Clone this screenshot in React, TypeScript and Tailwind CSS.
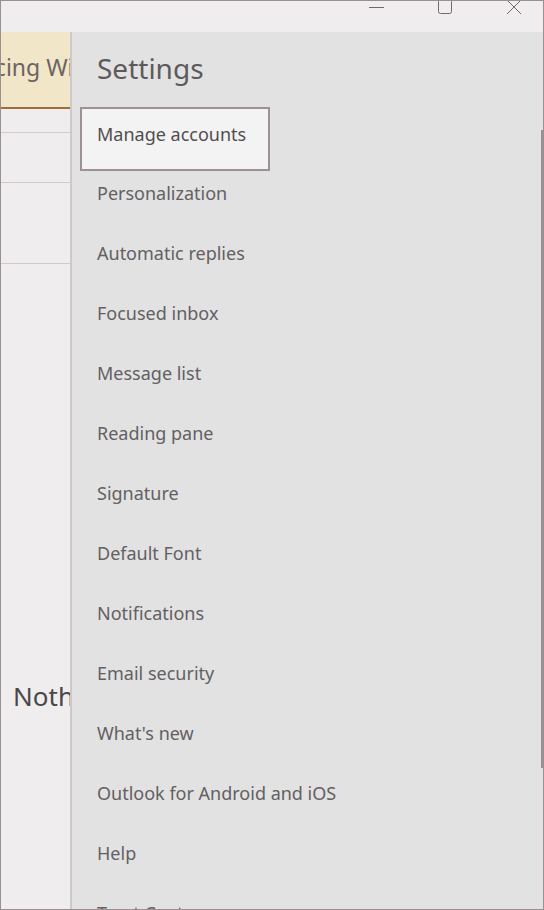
import React from "react";

const items = [
  "Personalization",
  "Automatic replies",
  "Focused inbox",
  "Message list",
  "Reading pane",
  "Signature",
  "Default Font",
  "Notifications",
  "Email security",
  "What's new",
  "Outlook for Android and iOS",
  "Help",
  "Trust Center",
];

export default function App() {
  return (
    <div
      className="w-[544px] h-[910px] bg-[#efedee] border border-[#9b8f93] flex flex-col overflow-hidden text-[#636062]"
      style={{ fontFamily: '"Noto Sans", "Open Sans", sans-serif' }}
    >
      {/* Title bar */}
      <div className="h-[31px] shrink-0 flex items-start justify-end relative">
        <div className="w-[58px] h-[31px] flex items-start justify-center">
          <svg width="16" height="14" viewBox="0 0 16 14">
            <line x1="1" y1="6.5" x2="16" y2="6.5" stroke="#6f6a6c" strokeWidth="1" />
          </svg>
        </div>
        <div className="w-[80px] h-[31px] flex items-start justify-center">
          <svg width="16" height="15" viewBox="0 0 16 15" className="-mt-[2px]">
            <rect x="1.5" y="0.5" width="13" height="14" rx="2" fill="none" stroke="#6f6a6c" strokeWidth="1" />
          </svg>
        </div>
        <div className="w-[58px] h-[31px] flex items-start justify-center">
          <svg width="16" height="16" viewBox="0 0 16 16" className="-mt-[2px]">
            <line x1="1" y1="1" x2="15" y2="15" stroke="#6f6a6c" strokeWidth="1" />
            <line x1="15" y1="1" x2="1" y2="15" stroke="#6f6a6c" strokeWidth="1" />
          </svg>
        </div>
      </div>

      {/* Body */}
      <div className="flex-1 flex min-h-0">
        {/* Left mail list */}
        <div className="w-[69px] shrink-0 flex flex-col overflow-hidden">
          <div className="h-[77px] bg-[#f1e6c7] border-b-2 border-[#9d6d3c] flex items-center overflow-hidden pb-[4px]">
            <span className="text-[23px] whitespace-nowrap -ml-[31px] text-[#6a6466]">Facing Windows</span>
          </div>
          <div className="h-[24px] border-b border-[#cfcbcc]" />
          <div className="h-[50px] border-b border-[#cfcbcc]" />
          <div className="h-[81px] border-b border-[#cfcbcc]" />
          <div className="flex-1 relative">
            <span className="absolute left-[12px] top-[419px] text-[26px] leading-none text-[#4b4749] whitespace-nowrap">
              Nothing
            </span>
          </div>
        </div>
        <div className="w-[2px] shrink-0 bg-[#cbc9ca]" />

        {/* Settings panel */}
        <div className="flex-1 bg-[#e2e2e2] flex min-w-0">
          <div className="flex-1 flex flex-col overflow-hidden min-w-0">
            <div className="h-[71px] shrink-0 flex items-center pl-[25px]">
              <span className="text-[28px] text-[#5e5a5c]">Settings</span>
            </div>
            <div className="h-[60px] shrink-0 relative">
              <div className="absolute left-[8px] top-[4px] w-[190px] h-[64px] border-2 border-[#9e9195] bg-[#f3f3f3] flex items-start pt-[12px] pl-[15px]">
                <span className="text-[18px] text-[#524e50]">Manage accounts</span>
              </div>
            </div>
            {items.map((t) => (
              <div key={t} className="h-[60px] shrink-0 flex items-center pl-[25px]">
                <span className="text-[18px] whitespace-nowrap">{t}</span>
              </div>
            ))}
          </div>
          <div className="w-[2px] shrink-0 flex flex-col">
            <div className="h-[98px]" />
            <div className="h-[638px] bg-[#9b8f93]" />
          </div>
        </div>
      </div>
    </div>
  );
}
